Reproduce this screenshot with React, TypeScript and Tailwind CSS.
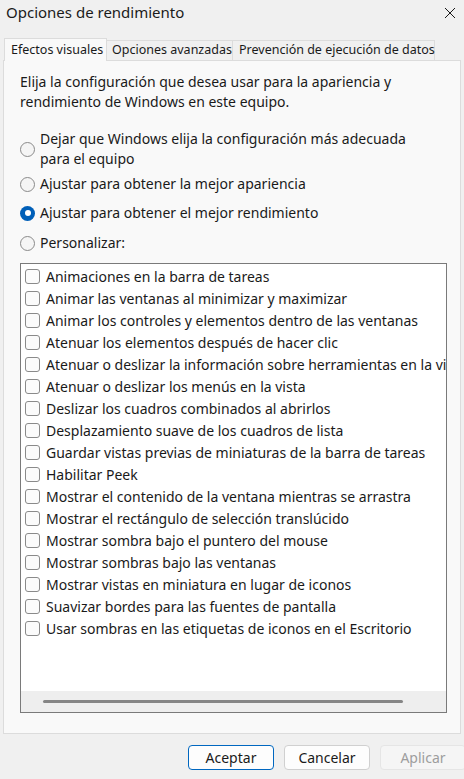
import React from 'react'

const ITEMS = [
  'Animaciones en la barra de tareas',
  'Animar las ventanas al minimizar y maximizar',
  'Animar los controles y elementos dentro de las ventanas',
  'Atenuar los elementos después de hacer clic',
  'Atenuar o deslizar la información sobre herramientas en la vista',
  'Atenuar o deslizar los menús en la vista',
  'Deslizar los cuadros combinados al abrirlos',
  'Desplazamiento suave de los cuadros de lista',
  'Guardar vistas previas de miniaturas de la barra de tareas',
  'Habilitar Peek',
  'Mostrar el contenido de la ventana mientras se arrastra',
  'Mostrar el rectángulo de selección translúcido',
  'Mostrar sombra bajo el puntero del mouse',
  'Mostrar sombras bajo las ventanas',
  'Mostrar vistas en miniatura en lugar de iconos',
  'Suavizar bordes para las fuentes de pantalla',
  'Usar sombras en las etiquetas de iconos en el Escritorio',
]

function Radio({ checked }: { checked?: boolean }) {
  if (checked) {
    return (
      <span className="w-[15px] h-[15px] rounded-full bg-[#005fb8] flex items-center justify-center shrink-0">
        <span className="w-[6px] h-[6px] rounded-full bg-white" />
      </span>
    )
  }
  return <span className="w-[15px] h-[15px] rounded-full border border-[#8a8a8a] bg-[#f5f5f5] shrink-0" />
}

export default function App() {
  return (
    <div
      className="w-[464px] h-[779px] bg-[#f0f0f0] flex flex-col text-[#1a1a1a] overflow-hidden"
      style={{ fontFamily: '"Noto Sans", sans-serif' }}
    >
      {/* Title bar */}
      <div className="h-[25px] flex items-center justify-between pl-[6px] pr-[6px]">
        <span className="text-[15px]">Opciones de rendimiento</span>
        <svg width="12" height="12" viewBox="0 0 12 12" className="mr-[2px]">
          <path d="M1 1 L11 11 M11 1 L1 11" stroke="#1a1a1a" strokeWidth="1" />
        </svg>
      </div>

      {/* Tabs */}
      <div className="flex items-end pl-[4px] mt-[13px] text-[12.5px] whitespace-nowrap -mb-px relative z-10">
        <div className="w-[103px] h-[23px] pl-[6px] flex items-center bg-[#f9f9f9] border border-[#dcdcdc] border-b-0">
          Efectos visuales
        </div>
        <div className="w-[126px] h-[21px] pl-[5px] flex items-center bg-[#f0f0f0] border border-[#dcdcdc] border-l-0">
          Opciones avanzadas
        </div>
        <div className="w-[202px] h-[21px] pl-[6px] flex items-center bg-[#f0f0f0] border border-[#dcdcdc] border-l-0">
          Prevención de ejecución de datos
        </div>
      </div>

      {/* Panel */}
      <div className="mx-[3px] h-[674px] bg-[#f9f9f9] border border-[#dcdcdc] px-[16px] pt-[11px] flex flex-col text-[14px]">
        <p className="leading-[20px]">
          Elija la configuración que desea usar para la apariencia y rendimiento de Windows en este equipo.
        </p>

        <div className="flex items-center gap-[5px] mt-[17px]">
          <Radio />
          <span className="leading-[20px]">
            Dejar que Windows elija la configuración más adecuada
            <br />
            para el equipo
          </span>
        </div>
        <div className="flex items-center gap-[5px] mt-[5px] leading-[20px]">
          <Radio />
          <span>Ajustar para obtener la mejor apariencia</span>
        </div>
        <div className="flex items-center gap-[5px] mt-[9px] leading-[20px]">
          <Radio checked />
          <span>Ajustar para obtener el mejor rendimiento</span>
        </div>
        <div className="flex items-center gap-[5px] mt-[10px] leading-[20px]">
          <Radio />
          <span>Personalizar:</span>
        </div>

        {/* List box */}
        <div className="mt-[10px] w-[427px] h-[450px] border border-[#7a7a7a] bg-white flex flex-col overflow-hidden">
          <div className="flex-1 pt-[1px] overflow-hidden">
            {ITEMS.map(item => (
              <div key={item} className="h-[22px] flex items-center gap-[6px] pl-[4px] whitespace-nowrap">
                <span className="w-[15px] h-[15px] rounded-[3px] border border-[#8a8a8a] bg-[#fbfbfb] shrink-0" />
                <span>{item}</span>
              </div>
            ))}
          </div>
          <div className="h-[21px] bg-[#eeeeee] flex items-center pl-[22px]">
            <div className="w-[360px] h-[3px] rounded-full bg-[#858585]" />
          </div>
        </div>
      </div>

      {/* Buttons */}
      <div className="flex justify-end gap-[10px] mt-[11px] text-[14px] -mr-[2px]">
        <button className="w-[86px] h-[25px] rounded-[4px] border border-[#0067c0] bg-[#fdfdfd] flex items-center justify-center">
          Aceptar
        </button>
        <button className="w-[86px] h-[25px] rounded-[4px] border border-[#d0d0d0] bg-[#fdfdfd] flex items-center justify-center">
          Cancelar
        </button>
        <button className="w-[86px] h-[25px] rounded-[4px] border border-[#e5e5e5] bg-[#f5f5f5] text-[#9d9d9d] flex items-center justify-center">
          Aplicar
        </button>
      </div>
    </div>
  )
}
